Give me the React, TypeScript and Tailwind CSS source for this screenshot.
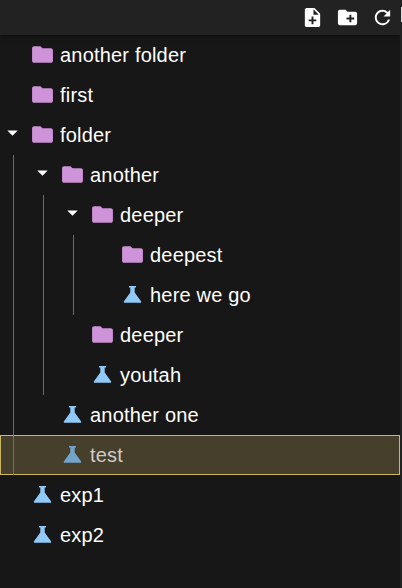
import type { ReactNode } from "react";
import { MdNoteAdd, MdCreateNewFolder, MdRefresh, MdArrowDropDown, MdFolder } from "react-icons/md";

type Node = { name: string; folder?: boolean; selected?: boolean; children?: Node[] };

const tree: Node[] = [
  { name: "another folder", folder: true },
  { name: "first", folder: true },
  {
    name: "folder",
    folder: true,
    children: [
      {
        name: "another",
        folder: true,
        children: [
          { name: "deeper", folder: true, children: [{ name: "deepest", folder: true }, { name: "here we go" }] },
          { name: "deeper", folder: true },
          { name: "youtah" },
        ],
      },
      { name: "another one" },
      { name: "test", selected: true },
    ],
  },
  { name: "exp1" },
  { name: "exp2" },
];

function Flask({ dim }: { dim?: boolean }) {
  return (
    <svg viewBox="0 0 25 25" className={`size-[25px] ${dim ? "fill-[#72a4cb]" : "fill-[#90caf9]"}`}>
      <path d="M9 4h7v1.500h-1.300v5.100l6.300 8.600c.5.800.2 1.600-.6 1.600H4.600c-.8 0-1.100-.8-.6-1.600l6.300-8.600V5.500H9z" />
    </svg>
  );
}

function Row({ node, depth }: { node: Node; depth: number }): ReactNode {
  return (
    <li>
      <div
        className={`flex h-10 w-[400px] items-center border ${
          node.selected ? "border-[#cdb664] bg-[#453f2c]" : "border-transparent"
        }`}
      >
        <div className="-ml-px flex items-center" style={{ paddingLeft: depth * 30 }}>
          <span className="flex w-[30px]">
            {node.children && <MdArrowDropDown className="-mt-[5px] size-[25px] text-white" />}
          </span>
          <span className="-mt-px flex w-[30px]">
            {node.folder ? <MdFolder className="size-[25px] text-[#ce93d8]" /> : <Flask dim={node.selected} />}
          </span>
          <span
            className={`whitespace-nowrap text-xl leading-[30px] tracking-[0.19px] ${
              node.selected ? "text-[#d0cbc6]" : "text-white"
            }`}
          >
            {node.name}
          </span>
        </div>
      </div>
      {node.children && (
        <ul className="relative">
          {node.children.map((c, i) => (
            <Row key={i} node={c} depth={depth + 1} />
          ))}
          <div className="absolute inset-y-0 w-px bg-[#747474]/90" style={{ left: 13 + depth * 30 }} />
        </ul>
      )}
    </li>
  );
}

export default function App() {
  return (
    <div className="flex h-[588px] w-[402px] overflow-hidden bg-[#171717] font-['Liberation_Sans',Arial,sans-serif]">
      <div className="w-[400px] shrink-0">
        <header className="flex h-[35px] items-center justify-end gap-3 bg-[#222222] pr-[6px] text-white shadow-[0_1px_4px_rgba(0,0,0,0.5)]">
          <MdNoteAdd className="size-[23px]" />
          <MdCreateNewFolder className="size-[23px]" />
          <MdRefresh className="size-[23px]" />
        </header>
        <ul>
          {tree.map((n, i) => (
            <Row key={i} node={n} depth={0} />
          ))}
        </ul>
      </div>
      <div className="flex w-0.5 justify-end bg-[#222222] pt-[7px]">
        <div className="h-[15px] w-px bg-[#d8d8d8]" />
      </div>
    </div>
  );
}
